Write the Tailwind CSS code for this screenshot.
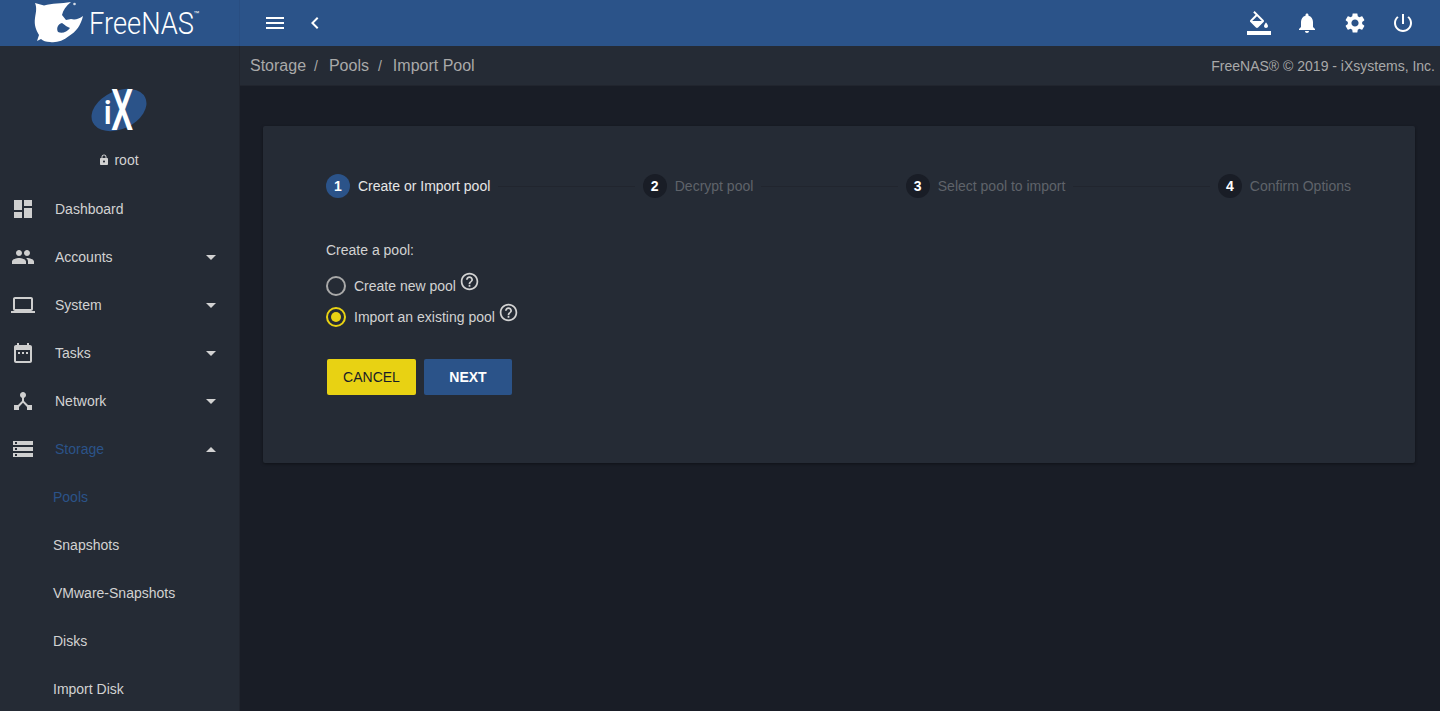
<!DOCTYPE html>
<html lang="en">
<head>
  <meta charset="UTF-8" />
  <title>FreeNAS - Import Pool</title>
  <script src="https://cdn.jsdelivr.net/npm/@tailwindcss/browser@4"></script>
</head>
<body class="h-[711px] overflow-hidden bg-[#191d26] font-['Liberation_Sans',Arial,sans-serif] text-sm text-[#e6e6e6]">
  <!-- top bar -->
  <header class="flex h-[46px] items-center bg-[#2b5389]">
    <div class="flex h-full w-[240px] items-center border-r border-[#294e82] pl-[34px]">
      <svg class="h-[44px] w-[52px] shrink-0" viewBox="34 1 52 44" fill="#fff">
        <path fill-rule="evenodd" d="M35 3 L44 5.5 C52 3 61 4 71 2 C66 6 63 10 62 15 L66 20 L71 19 C75 20 79 19 83 16 C81 25 76 32 69 36 C63 41 56 43 50 42 C46 42 43 41 41 39 L37 41 L39 35 C36 30 34 25 35 18 C36 12 37 8 35 3 Z M62 23 C58 24 56 28 58 32 C62 34 67 32 70 28 C67 27 65 25 62 23 Z" />
        <circle cx="74.500" cy="4" r="1.300" opacity="0.8" />
      </svg>
      <span class="mr-[-15px] ml-[3px] inline-block origin-left scale-x-[0.88] font-['Roboto',sans-serif] text-[31px] leading-none font-light text-white">FreeNAS</span>
      <span class="mb-[20px] text-[6px] text-white">™</span>
    </div>
    <button class="ml-[23px] text-white">
      <svg class="block size-6" viewBox="0 0 24 24" fill="currentColor"><path d="M3 18h18v-2H3v2zm0-5h18v-2H3v2zm0-7v2h18V6H3z" /></svg>
    </button>
    <button class="ml-[16px] text-white">
      <svg class="block size-6" viewBox="0 0 24 24" fill="currentColor"><path d="M15.41 7.41L14 6l-6 6 6 6 1.41-1.41L10.83 12z" /></svg>
    </button>
    <div class="ml-auto flex items-center gap-[24px] pr-[25px] text-white">
      <svg class="block size-6" viewBox="0 0 24 24" fill="currentColor"><path d="M16.56 8.94L7.62 0 6.21 1.41l2.38 2.38-5.15 5.15c-.59.59-.59 1.54 0 2.12l5.5 5.5c.29.29.68.44 1.06.44s.77-.15 1.06-.44l5.5-5.5c.59-.58.59-1.53 0-2.12zM5.21 10L10 5.21 14.79 10H5.21zM19 11.5s-2 2.17-2 3.5c0 1.1.9 2 2 2s2-.9 2-2c0-1.33-2-3.5-2-3.5z" /><path d="M0 20h24v4H0z" /></svg>
      <svg class="block size-6" viewBox="0 0 24 24" fill="currentColor"><path d="M12 22c1.1 0 2-.9 2-2h-4c0 1.1.89 2 2 2zm6-6v-5c0-3.07-1.64-5.64-4.5-6.32V4c0-.83-.67-1.5-1.5-1.5s-1.5.67-1.5 1.5v.68C7.63 5.36 6 7.92 6 11v5l-2 2v1h16v-1l-2-2z" /></svg>
      <svg class="block size-6" viewBox="0 0 24 24" fill="currentColor"><path d="M19.14 12.94c.04-.3.06-.61.06-.94 0-.32-.02-.64-.07-.94l2.03-1.58c.18-.14.23-.41.12-.61l-1.92-3.32c-.12-.22-.37-.29-.59-.22l-2.39.96c-.5-.38-1.03-.7-1.62-.94l-.36-2.54c-.04-.24-.24-.41-.48-.41h-3.84c-.24 0-.43.17-.47.41l-.36 2.54c-.59.24-1.13.57-1.62.94l-2.39-.96c-.22-.08-.47 0-.59.22L2.74 8.87c-.12.21-.08.47.12.61l2.03 1.58c-.05.3-.09.63-.09.94s.02.64.07.94l-2.03 1.58c-.18.14-.23.41-.12.61l1.92 3.32c.12.22.37.29.59.22l2.39-.96c.5.38 1.03.7 1.62.94l.36 2.54c.05.24.24.41.48.41h3.84c.24 0 .44-.17.47-.41l.36-2.54c.59-.24 1.13-.56 1.62-.94l2.39.96c.22.08.47 0 .59-.22l1.92-3.32c.12-.22.07-.47-.12-.61l-2.01-1.58zM12 15.6c-1.98 0-3.6-1.62-3.6-3.6s1.62-3.6 3.6-3.6 3.6 1.62 3.6 3.6-1.62 3.6-3.6 3.6z" /></svg>
      <svg class="block size-6" viewBox="0 0 24 24" fill="currentColor"><path d="M13 3h-2v10h2V3zm4.83 2.17l-1.42 1.42C17.99 7.86 19 9.81 19 12c0 3.87-3.13 7-7 7s-7-3.13-7-7c0-2.19 1.01-4.14 2.58-5.42L6.17 5.17C4.23 6.82 3 9.26 3 12c0 4.97 4.03 9 9 9s9-4.03 9-9c0-2.74-1.23-5.18-3.17-6.83z" /></svg>
    </div>
  </header>

  <div class="flex h-[665px]">
    <!-- sidebar -->
    <aside class="w-[240px] shrink-0 border-r border-[#21252e] bg-[#252b35]">
      <div class="flex h-[139px] flex-col items-center">
        <svg class="mt-[30px] h-[70px] w-[60px]" viewBox="0 -12 60 70">
          <ellipse cx="29" cy="22" rx="29" ry="19" fill="#2b5389" transform="rotate(-25 29 22)" />
          <text transform="translate(13.500 36)" font-family="Roboto, sans-serif" font-weight="500" font-size="33" fill="#fff">i</text>
          <text transform="translate(21 42) scale(0.62 1)" font-family="Roboto, sans-serif" font-size="57" font-weight="500" fill="#fff">X</text>
        </svg>
        <div class="mt-[4px] flex items-center justify-center pr-[2px] text-[#d2d2d2]">
          <svg class="mr-[4px] size-[12px]" viewBox="0 0 24 24" fill="currentColor"><path d="M18 8h-1V6c0-2.76-2.24-5-5-5S7 3.24 7 6v2H6c-1.1 0-2 .9-2 2v10c0 1.1.9 2 2 2h12c1.1 0 2-.9 2-2V10c0-1.1-.9-2-2-2zm-6 9c-1.1 0-2-.9-2-2s.9-2 2-2 2 .9 2 2-.9 2-2 2zm3.1-9H8.9V6c0-1.71 1.39-3.1 3.1-3.1 1.71 0 3.1 1.39 3.1 3.1v2z" /></svg>
          root
        </div>
      </div>
      <nav class="text-[#d2d2d2]">
        <a class="flex h-12 items-center pl-[11px]">
          <svg class="size-6 shrink-0 text-[#cfcfcf]" viewBox="0 0 24 24" fill="currentColor"><path d="M3 13h8V3H3v10zm0 8h8v-6H3v6zm10 0h8V11h-8v10zm0-18v6h8V3h-8z" /></svg>
          <span class="ml-[20px]">Dashboard</span>
        </a>
        <a class="flex h-12 items-center pl-[11px]">
          <svg class="size-6 shrink-0 text-[#cfcfcf]" viewBox="0 0 24 24" fill="currentColor"><path d="M16 11c1.66 0 2.99-1.34 2.99-3S17.66 5 16 5c-1.66 0-3 1.34-3 3s1.34 3 3 3zm-8 0c1.66 0 2.99-1.34 2.99-3S9.66 5 8 5C6.34 5 5 6.34 5 8s1.34 3 3 3zm0 2c-2.33 0-7 1.17-7 3.5V19h14v-2.5c0-2.33-4.67-3.5-7-3.5zm8 0c-.29 0-.62.02-.97.05 1.16.84 1.97 1.97 1.97 3.45V19h6v-2.5c0-2.33-4.67-3.5-7-3.5z" /></svg>
          <span class="ml-[20px]">Accounts</span>
          <span class="mr-[23px] ml-auto size-0 border-x-[5px] border-t-[5px] border-x-transparent border-t-[#d2d2d2]"></span>
        </a>
        <a class="flex h-12 items-center pl-[11px]">
          <svg class="size-6 shrink-0 text-[#cfcfcf]" viewBox="0 0 24 24" fill="currentColor"><path d="M20 18c1.1 0 1.99-.9 1.99-2L22 6c0-1.1-.9-2-2-2H4c-1.1 0-2 .9-2 2v10c0 1.1.9 2 2 2H0v2h24v-2h-4zM4 6h16v10H4V6z" /></svg>
          <span class="ml-[20px]">System</span>
          <span class="mr-[23px] ml-auto size-0 border-x-[5px] border-t-[5px] border-x-transparent border-t-[#d2d2d2]"></span>
        </a>
        <a class="flex h-12 items-center pl-[11px]">
          <svg class="size-6 shrink-0 text-[#cfcfcf]" viewBox="0 0 24 24" fill="currentColor"><path d="M9 11H7v2h2v-2zm4 0h-2v2h2v-2zm4 0h-2v2h2v-2zm2-7h-1V2h-2v2H8V2H6v2H5c-1.11 0-1.99.9-1.99 2L3 20c0 1.1.89 2 2 2h14c1.1 0 2-.9 2-2V6c0-1.1-.9-2-2-2zm0 16H5V9h14v11z" /></svg>
          <span class="ml-[20px]">Tasks</span>
          <span class="mr-[23px] ml-auto size-0 border-x-[5px] border-t-[5px] border-x-transparent border-t-[#d2d2d2]"></span>
        </a>
        <a class="flex h-12 items-center pl-[11px]">
          <svg class="size-6 shrink-0 text-[#cfcfcf]" viewBox="0 0 24 24" fill="currentColor"><path d="M17 16l-4-4V8.82C14.16 8.4 15 7.3 15 6c0-1.66-1.34-3-3-3S9 4.34 9 6c0 1.3.84 2.4 2 2.82V12l-4 4H3v5h5v-3.05l4-4.2 4 4.2V21h5v-5h-4z" /></svg>
          <span class="ml-[20px]">Network</span>
          <span class="mr-[23px] ml-auto size-0 border-x-[5px] border-t-[5px] border-x-transparent border-t-[#d2d2d2]"></span>
        </a>
        <a class="flex h-12 items-center pl-[11px]">
          <svg class="size-6 shrink-0 text-[#cfcfcf]" viewBox="0 0 24 24" fill="currentColor"><path d="M2 20h20v-4H2v4zm2-3h2v2H4v-2zM2 4v4h20V4H2zm4 3H4V5h2v2zm-4 7h20v-4H2v4zm2-3h2v2H4v-2z" /></svg>
          <span class="ml-[20px] text-[#2b5389]">Storage</span>
          <span class="mr-[23px] ml-auto size-0 border-x-[5px] border-b-[5px] border-x-transparent border-b-[#d2d2d2]"></span>
        </a>
        <a class="flex h-12 items-center pl-[53px] text-[#2b5389]">Pools</a>
        <a class="flex h-12 items-center pl-[53px]">Snapshots</a>
        <a class="flex h-12 items-center pl-[53px]">VMware-Snapshots</a>
        <a class="flex h-12 items-center pl-[53px]">Disks</a>
        <a class="flex h-12 items-center pl-[53px]">Import Disk</a>
      </nav>
    </aside>

    <main class="min-w-0 flex-1">
      <!-- breadcrumbs -->
      <div class="flex h-10 items-center border-b border-[#21252e] bg-[#252b35] pr-[5px] pl-[10px] text-[#a9a9a9]">
        <span class="text-base">Storage</span>
        <span class="mr-[8px] ml-[8px]">/</span>
        <span class="ml-[3px] text-base">Pools</span>
        <span class="mr-[8px] ml-[9px]">/</span>
        <span class="ml-[3px] text-base">Import Pool</span>
        <span class="ml-auto">FreeNAS® © 2019 - iXsystems, Inc.</span>
      </div>

      <!-- wizard card -->
      <section class="mt-10 mr-[25px] ml-[23px] h-[337px] rounded-[2px] bg-[#252b35] pt-[48px] pr-[64px] pl-[63px] shadow-[0_1px_3px_rgba(0,0,0,0.4)]">
        <div class="flex items-center">
          <span class="flex size-6 items-center justify-center rounded-full bg-[#2b5389] font-bold text-white">1</span>
          <span class="ml-2 text-[#e6e6e6]">Create or Import pool</span>
          <span class="mx-2 h-px flex-1 bg-[#21252e]"></span>
          <span class="flex size-6 items-center justify-center rounded-full bg-[#191d26] font-bold text-white">2</span>
          <span class="ml-2 text-[#5f636a]">Decrypt pool</span>
          <span class="mx-2 h-px flex-1 bg-[#21252e]"></span>
          <span class="flex size-6 items-center justify-center rounded-full bg-[#191d26] font-bold text-white">3</span>
          <span class="ml-2 text-[#5f636a]">Select pool to import</span>
          <span class="mx-2 h-px flex-1 bg-[#21252e]"></span>
          <span class="flex size-6 items-center justify-center rounded-full bg-[#191d26] font-bold text-white">4</span>
          <span class="ml-2 text-[#5f636a]">Confirm Options</span>
        </div>

        <p class="mt-[44px] leading-[16px] text-[#d2d2d2]">Create a pool:</p>

        <div class="mt-[12px] flex h-[31px] items-center text-[#d2d2d2]">
          <span class="size-5 rounded-full border-2 border-[#a9a9a9]"></span>
          <span class="ml-2">Create new pool</span>
          <svg class="mb-[8px] ml-[3px] size-[21px]" viewBox="0 0 24 24" fill="currentColor"><path d="M11 18h2v-2h-2v2zm1-16C6.48 2 2 6.48 2 12s4.48 10 10 10 10-4.48 10-10S17.52 2 12 2zm0 18c-4.41 0-8-3.59-8-8s3.59-8 8-8 8 3.59 8 8-3.59 8-8 8zm0-14c-2.21 0-4 1.79-4 4h2c0-1.1.9-2 2-2s2 .9 2 2c0 2-3 1.75-3 5h2c0-2.25 3-2.5 3-5 0-2.21-1.79-4-4-4z" /></svg>
        </div>
        <div class="flex h-[31px] items-center text-[#d2d2d2]">
          <span class="flex size-5 items-center justify-center rounded-full border-2 border-[#e8d213]">
            <span class="size-[10px] rounded-full bg-[#e8d213]"></span>
          </span>
          <span class="ml-2">Import an existing pool</span>
          <svg class="mb-[8px] ml-[3px] size-[21px]" viewBox="0 0 24 24" fill="currentColor"><path d="M11 18h2v-2h-2v2zm1-16C6.48 2 2 6.48 2 12s4.48 10 10 10 10-4.48 10-10S17.52 2 12 2zm0 18c-4.41 0-8-3.59-8-8s3.59-8 8-8 8 3.59 8 8-3.59 8-8 8zm0-14c-2.21 0-4 1.79-4 4h2c0-1.1.9-2 2-2s2 .9 2 2c0 2-3 1.75-3 5h2c0-2.25 3-2.5 3-5 0-2.21-1.79-4-4-4z" /></svg>
        </div>

        <div class="mt-[27px] ml-px flex gap-2">
          <button class="h-9 w-[89px] rounded-[2px] bg-[#e8d213] text-[#191d26]">CANCEL</button>
          <button class="h-9 w-[88px] rounded-[2px] bg-[#2b5389] font-bold text-white">NEXT</button>
        </div>
      </section>
    </main>
  </div>
</body>
</html>
